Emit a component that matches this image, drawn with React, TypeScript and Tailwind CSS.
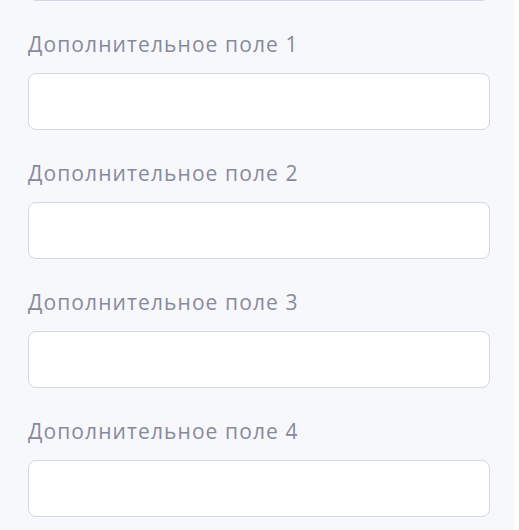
export default function App() {
  const fields = ['Дополнительное поле 1', 'Дополнительное поле 2', 'Дополнительное поле 3', 'Дополнительное поле 4']

  return (
    <div className="flex h-[530px] w-[519px] overflow-hidden bg-white">
      <div
        className="flex h-full w-[514px] flex-col bg-[#f7f8fc] px-7"
        style={{ fontFamily: '"Open Sans", "Noto Sans", sans-serif' }}
      >
        {/* previous field, scrolled out of view */}
        <div className="-mt-[56px] h-[57px] w-[462px] shrink-0 rounded-lg border border-[#d4d6e4] bg-white" />

        {fields.map((label) => (
          <div key={label} className="mt-[29px] flex shrink-0 flex-col">
            <label className="text-[21px] leading-[28px] tracking-[1.1px] text-[#878a9b]">{label}</label>
            <input
              type="text"
              className="mt-[15px] h-[57px] w-[462px] rounded-lg border border-[#d4d6e4] bg-white px-4 outline-none"
            />
          </div>
        ))}
      </div>
    </div>
  )
}
